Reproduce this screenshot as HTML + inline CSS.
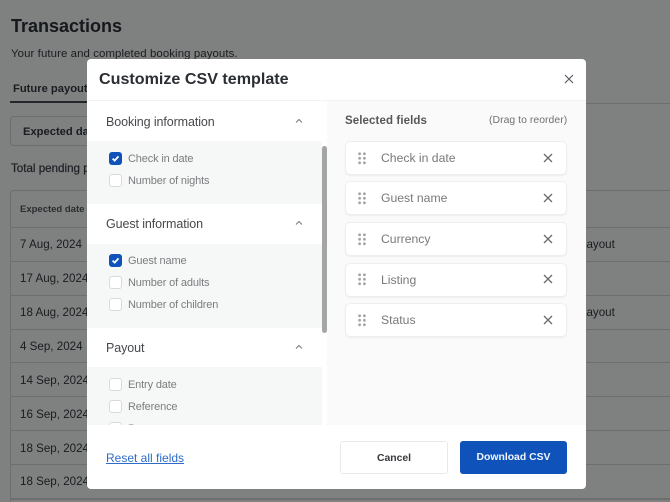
<!DOCTYPE html>
<html><head><meta charset="utf-8">
<style>
html,body{margin:0;padding:0;width:670px;height:502px;overflow:hidden}
body{position:relative;background:#7f8180;font-family:"Liberation Sans",sans-serif}
#clip{position:absolute;left:0;top:0;width:670px;height:502px;overflow:hidden}
.a{position:absolute;white-space:nowrap}
.bgt{color:#191c20;font-size:11.6px;line-height:14px}
.line{position:absolute;left:11px;width:659px;height:1px;background:#6d6f6e}
.m{position:absolute;left:87px;top:59px;width:499px;height:430px;background:#fff;border-radius:4px;overflow:hidden}
.lb{color:#7a7c7e;font-size:11px;line-height:14px;letter-spacing:-.15px}
.h{color:#46484b;font-size:12.5px;line-height:16px;letter-spacing:-.1px}
.cb{position:absolute;left:22px;width:11px;height:11px;border:1px solid #d8dadb;border-radius:3px;background:#fff}
.cb.on{background:#0f52ba;border-color:#0f52ba}
.cb svg{position:absolute;left:0;top:0}
.g{position:absolute;left:0;width:235px;background:#f6f8f8}
.card{position:absolute;left:258px;width:220px;height:32px;background:#fff;border:1px solid #eeeeef;border-radius:5px;box-shadow:0 1px 1px #eee}
.card span{position:absolute;left:35px;top:8px;font-size:12.2px;line-height:16px;color:#77797b;letter-spacing:0}
.card svg{position:absolute}
</style></head><body><div id="clip">
<div class="a" style="left:11px;top:14px;font-size:18px;line-height:24px;font-weight:bold;color:#15181c">Transactions</div>
<div class="a bgt" style="left:11px;top:47px;font-size:11.4px;letter-spacing:.1px">Your future and completed booking payouts.</div>
<div class="a bgt" style="left:13px;top:82px;font-weight:bold;font-size:11.2px">Future payouts</div>
<div class="a" style="left:10px;top:101px;width:80px;height:2px;background:#23262a"></div>
<div class="a" style="left:10px;top:116px;width:100px;height:30px;border:1px solid #6d6f6e;border-radius:4px;box-sizing:border-box"></div>
<div class="a bgt" style="left:23px;top:125px;font-weight:bold;font-size:11.2px">Expected date</div>
<div class="a bgt" style="left:11px;top:162px;font-size:11.6px;color:#1f2226;-webkit-text-stroke:.25px #1f2226">Total pending payouts</div>
<div class="a" style="left:10px;top:190px;width:670px;height:330px;border:1px solid #6d6f6e;border-radius:4px;box-sizing:border-box"></div>
<div class="a bgt" style="left:20px;top:203px;font-size:9.5px;font-weight:bold;color:#2a2d30">Expected date</div>
<div class="line" style="top:227px"></div>
<div class="line" style="top:261px"></div>
<div class="line" style="top:295px"></div>
<div class="line" style="top:329px"></div>
<div class="line" style="top:362px"></div>
<div class="line" style="top:396px"></div>
<div class="line" style="top:430px"></div>
<div class="line" style="top:464px"></div>
<div class="line" style="top:498px;height:2px"></div>
<div class="a" style="left:586px;top:103px;width:84px;height:1px;background:#6d6f6e"></div>
<div class="a bgt" style="left:20px;top:238px">7 Aug, 2024</div>
<div class="a bgt" style="left:20px;top:272px">17 Aug, 2024</div>
<div class="a bgt" style="left:20px;top:306px">18 Aug, 2024</div>
<div class="a bgt" style="left:20px;top:340px">4 Sep, 2024</div>
<div class="a bgt" style="left:20px;top:374px">14 Sep, 2024</div>
<div class="a bgt" style="left:20px;top:408px">16 Sep, 2024</div>
<div class="a bgt" style="left:20px;top:442px">18 Sep, 2024</div>
<div class="a bgt" style="left:20px;top:475px">18 Sep, 2024</div>
<div class="a bgt" style="left:580px;top:238px">payout</div>
<div class="a bgt" style="left:580px;top:306px">payout</div>

<div class="m">
  <div class="a" style="left:12px;top:10px;font-size:16.1px;line-height:20px;font-weight:bold;color:#2b2e32">Customize CSV template</div>
  <svg class="a" style="left:477px;top:15px" width="10" height="10" viewBox="0 0 10 10"><path d="M1 1L9 9M9 1L1 9" stroke="#5a5e68" stroke-width="1.2" fill="none"/></svg>
  <div class="a" style="left:0;top:41px;width:499px;height:1px;background:#f3f3f3"></div>
  <div class="a" style="left:240px;top:42px;width:259px;height:324px;background:#fafafa"></div>

  <div class="a h" style="left:19px;top:55px">Booking information</div>
  <svg class="a" style="left:208px;top:59px" width="8" height="6" viewBox="0 0 8 6"><path d="M1 4.5L4 1.5L7 4.5" stroke="#77797c" stroke-width="1" fill="none"/></svg>
  <div class="g" style="top:82px;height:63px"></div>
  <div class="cb on" style="top:93px"><svg width="11" height="11" viewBox="0 0 11 11"><path d="M2.6 5.6L4.7 7.6L8.5 3.4" stroke="#fff" stroke-width="1.8" fill="none"/></svg></div>
  <div class="a lb" style="left:41px;top:93px">Check in date</div>
  <div class="cb" style="top:115px"></div>
  <div class="a lb" style="left:41px;top:115px">Number of nights</div>

  <div class="a h" style="left:19px;top:157px">Guest information</div>
  <svg class="a" style="left:208px;top:161px" width="8" height="6" viewBox="0 0 8 6"><path d="M1 4.5L4 1.5L7 4.5" stroke="#77797c" stroke-width="1" fill="none"/></svg>
  <div class="g" style="top:185px;height:84px"></div>
  <div class="cb on" style="top:195px"><svg width="11" height="11" viewBox="0 0 11 11"><path d="M2.6 5.6L4.7 7.6L8.5 3.4" stroke="#fff" stroke-width="1.8" fill="none"/></svg></div>
  <div class="a lb" style="left:41px;top:195px">Guest name</div>
  <div class="cb" style="top:217px"></div>
  <div class="a lb" style="left:41px;top:217px">Number of adults</div>
  <div class="cb" style="top:239px"></div>
  <div class="a lb" style="left:41px;top:239px">Number of children</div>

  <div class="a h" style="left:19px;top:281px">Payout</div>
  <svg class="a" style="left:208px;top:285px" width="8" height="6" viewBox="0 0 8 6"><path d="M1 4.5L4 1.5L7 4.5" stroke="#77797c" stroke-width="1" fill="none"/></svg>
  <div class="g" style="top:308px;height:58px;overflow:hidden">
    <div class="cb" style="top:11px"></div>
    <div class="a lb" style="left:41px;top:11px">Entry date</div>
    <div class="cb" style="top:33px"></div>
    <div class="a lb" style="left:41px;top:33px">Reference</div>
    <div class="cb" style="top:55px"></div>
    <div class="a lb" style="left:41px;top:55px">Payout</div>
  </div>
  <div class="a" style="left:235px;top:87px;width:5px;height:187px;background:#a3a5a6;border-radius:2.5px"></div>

  <div class="a" style="left:258px;top:55px;font-size:11.5px;line-height:14px;font-weight:bold;color:#55575a;letter-spacing:.1px">Selected fields</div>
  <div class="a" style="left:402px;top:55px;font-size:10.4px;line-height:14px;color:#6e7072;letter-spacing:.05px">(Drag to reorder)</div>

  <div class="card" style="top:82px"><svg style="left:12px;top:10px" width="9" height="13" viewBox="0 0 9 13" fill="#a2a4a6"><circle cx="1.6" cy="1.8" r="1.4"/><circle cx="6.4" cy="1.8" r="1.4"/><circle cx="1.6" cy="6.3" r="1.4"/><circle cx="6.4" cy="6.3" r="1.4"/><circle cx="1.6" cy="10.8" r="1.4"/><circle cx="6.4" cy="10.8" r="1.4"/></svg><span>Check in date</span><svg style="left:197px;top:11px" width="10" height="10" viewBox="0 0 10 10"><path d="M1 1L9 9M9 1L1 9" stroke="#6a6c6f" stroke-width="1.3" fill="none"/></svg></div>
  <div class="card" style="top:122px"><svg style="left:12px;top:10px" width="9" height="13" viewBox="0 0 9 13" fill="#a2a4a6"><circle cx="1.6" cy="1.8" r="1.4"/><circle cx="6.4" cy="1.8" r="1.4"/><circle cx="1.6" cy="6.3" r="1.4"/><circle cx="6.4" cy="6.3" r="1.4"/><circle cx="1.6" cy="10.8" r="1.4"/><circle cx="6.4" cy="10.8" r="1.4"/></svg><span>Guest name</span><svg style="left:197px;top:11px" width="10" height="10" viewBox="0 0 10 10"><path d="M1 1L9 9M9 1L1 9" stroke="#6a6c6f" stroke-width="1.3" fill="none"/></svg></div>
  <div class="card" style="top:163px"><svg style="left:12px;top:10px" width="9" height="13" viewBox="0 0 9 13" fill="#a2a4a6"><circle cx="1.6" cy="1.8" r="1.4"/><circle cx="6.4" cy="1.8" r="1.4"/><circle cx="1.6" cy="6.3" r="1.4"/><circle cx="6.4" cy="6.3" r="1.4"/><circle cx="1.6" cy="10.8" r="1.4"/><circle cx="6.4" cy="10.8" r="1.4"/></svg><span>Currency</span><svg style="left:197px;top:11px" width="10" height="10" viewBox="0 0 10 10"><path d="M1 1L9 9M9 1L1 9" stroke="#6a6c6f" stroke-width="1.3" fill="none"/></svg></div>
  <div class="card" style="top:204px"><svg style="left:12px;top:9px" width="9" height="13" viewBox="0 0 9 13" fill="#a2a4a6"><circle cx="1.6" cy="1.8" r="1.4"/><circle cx="6.4" cy="1.8" r="1.4"/><circle cx="1.6" cy="6.3" r="1.4"/><circle cx="6.4" cy="6.3" r="1.4"/><circle cx="1.6" cy="10.8" r="1.4"/><circle cx="6.4" cy="10.8" r="1.4"/></svg><span style="top:8px">Listing</span><svg style="left:197px;top:10px" width="10" height="10" viewBox="0 0 10 10"><path d="M1 1L9 9M9 1L1 9" stroke="#6a6c6f" stroke-width="1.3" fill="none"/></svg></div>
  <div class="card" style="top:244px"><svg style="left:12px;top:10px" width="9" height="13" viewBox="0 0 9 13" fill="#a2a4a6"><circle cx="1.6" cy="1.8" r="1.4"/><circle cx="6.4" cy="1.8" r="1.4"/><circle cx="1.6" cy="6.3" r="1.4"/><circle cx="6.4" cy="6.3" r="1.4"/><circle cx="1.6" cy="10.8" r="1.4"/><circle cx="6.4" cy="10.8" r="1.4"/></svg><span>Status</span><svg style="left:197px;top:11px" width="10" height="10" viewBox="0 0 10 10"><path d="M1 1L9 9M9 1L1 9" stroke="#6a6c6f" stroke-width="1.3" fill="none"/></svg></div>

  <div class="a" style="left:19px;top:391px;font-size:12px;line-height:16px;color:#2f6cc9;text-decoration:underline">Reset all fields</div>
  <div class="a" style="left:253px;top:382px;width:108px;height:33px;box-sizing:border-box;border:1px solid #e9e9ea;border-radius:3px;background:#fff;text-align:center;font-size:10.4px;line-height:33px;font-weight:bold;color:#36383b">Cancel</div>
  <div class="a" style="left:373px;top:382px;width:107px;height:33px;border-radius:3px;background:#0f52ba;text-align:center;font-size:10.4px;line-height:34px;font-weight:bold;color:#f2f6fc">Download CSV</div>
</div>
</div></body></html>
